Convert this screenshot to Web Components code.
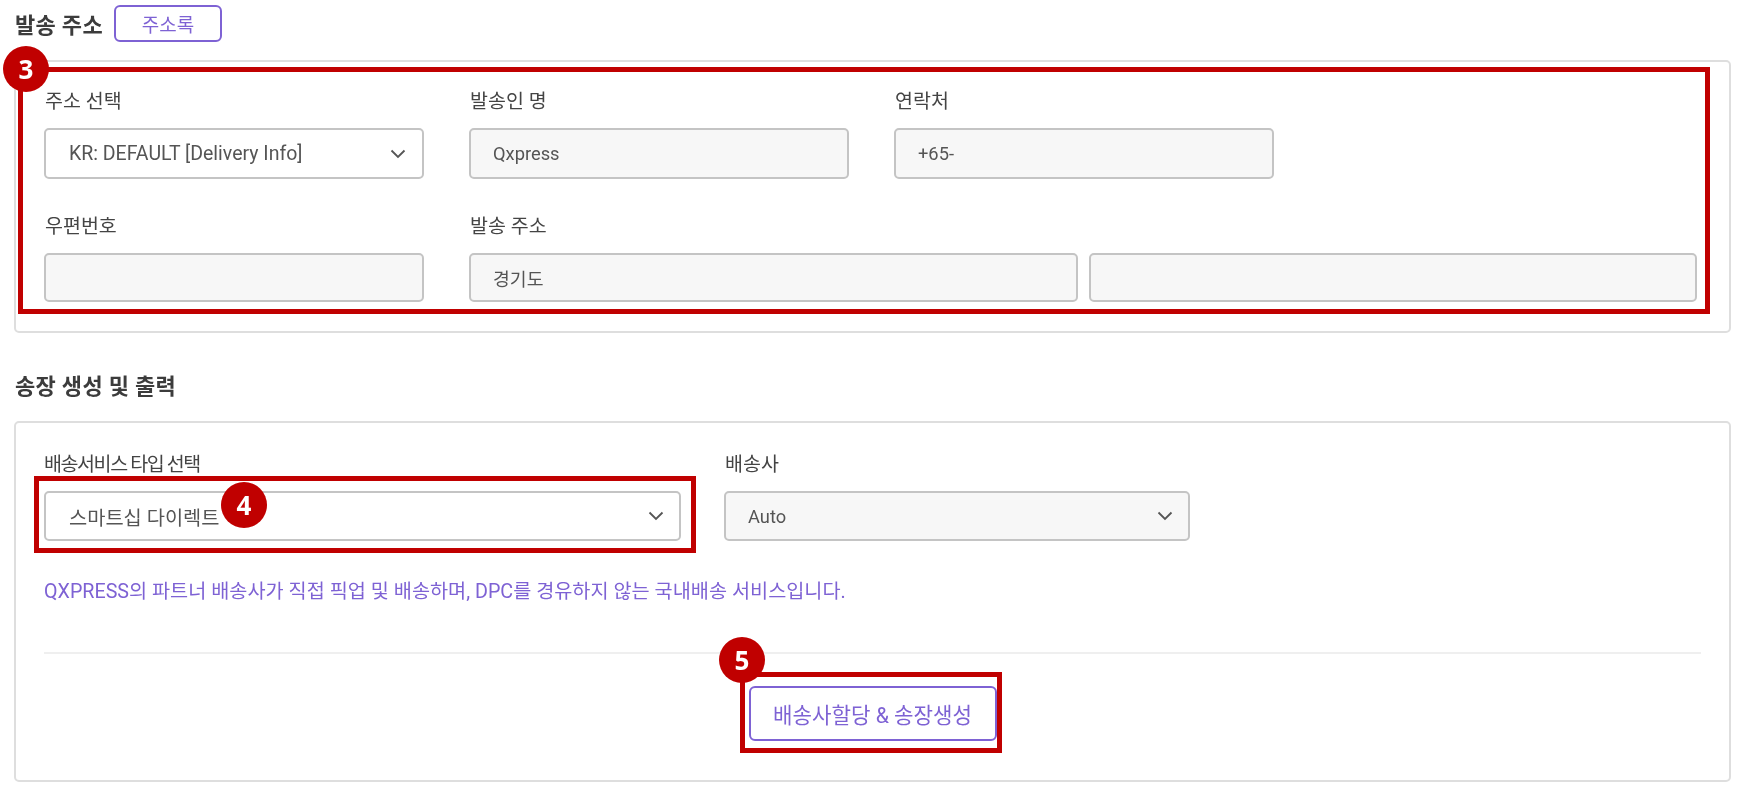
<!DOCTYPE html>
<html lang="ko"><head><meta charset="utf-8"><title>발송 주소</title>
<style>
html,body{margin:0;padding:0;background:#fff;height:787px;overflow:hidden}
body{font-family:Roboto,"Noto Sans CJK KR",sans-serif;color:#444}
</style></head><body>
<qx-page>
  <qx-head><span>발송 주소</span><qx-button slot="action" small>주소록</qx-button></qx-head>
  <qx-card style="--mt:18px;--pad:28px 32px 29px 28px">
    <qx-row style="--lg:14px">
      <qx-field label="주소 선택"><qx-input select white style="--fs:19.5px;--pr:16px">KR: DEFAULT [Delivery Info]</qx-input></qx-field>
      <qx-field label="발송인 명"><qx-input>Qxpress</qx-input></qx-field>
      <qx-field label="연락처"><qx-input>+65-</qx-input></qx-field>
    </qx-row>
    <qx-row style="--rmt:36px;--h:49px;--lg:14px">
      <qx-field label="우편번호"><qx-input></qx-input></qx-field>
      <qx-field label="발송 주소" wide><qx-input grow>경기도</qx-input><qx-input grow></qx-input></qx-field>
    </qx-row>
  </qx-card>
  <qx-head style="--mt:33px"><span>송장 생성 및 출력</span></qx-head>
  <qx-card style="--mt:18px;--pad:30px 28px 39px 28px">
    <qx-row style="--gap:43px;--h:50px;--lg:14px">
      <qx-field label="배송서비스 타입 선택" style="--w:637px;--ls:-1.4px;--lp:0"><qx-input select white style="--fs:19.8px">스마트십 다이렉트</qx-input></qx-field>
      <qx-field label="배송사" style="--w:466px"><qx-input select>Auto</qx-input></qx-field>
    </qx-row>
    <qx-note>QXPRESS의 파트너 배송사가 직접 픽업 및 배송하며, DPC를 경유하지 않는 국내배송 서비스입니다.</qx-note>
    <qx-actions><qx-button>배송사할당 &amp; 송장생성</qx-button></qx-actions>
  </qx-card>
  <qx-mark n="3" x="18" y="67" w="1692" h="247" bx="26" by="69"></qx-mark>
  <qx-mark n="4" x="34" y="476" w="662" h="77" bx="244" by="505"></qx-mark>
  <qx-mark n="5" x="740" y="672" w="262" h="81" bx="742" by="660"></qx-mark>
</qx-page>
<script>
const el=(name,html,init)=>customElements.define(name,class extends HTMLElement{
  constructor(){super();this.attachShadow({mode:'open'}).innerHTML=html;}
  connectedCallback(){init&&init(this,this.shadowRoot);}
});
el('qx-page',`<style>:host{display:block;position:relative;width:1741px;height:787px;padding:5px 10px 0 14px;box-sizing:border-box;filter:blur(.3px)}</style><slot></slot>`);
el('qx-head',`<style>:host{display:flex;align-items:center;gap:11px;height:37px;margin-top:var(--mt,0);padding-left:1px;font-size:22px;font-weight:700;color:#3c3c3c;letter-spacing:.3px}::slotted(span){padding-bottom:2px}</style><slot></slot><slot name="action"></slot>`);
el('qx-card',`<style>:host{display:block;margin-top:var(--mt,0);padding:var(--pad,0);border:2px solid #dedede;border-radius:5px;box-sizing:border-box;background:#fff}</style><slot></slot>`);
el('qx-row',`<style>:host{display:flex;gap:var(--gap,45px);margin-top:var(--rmt,0)}</style><slot></slot>`);
el('qx-field',`<style>:host{display:block;flex:none;width:var(--w,380px)}:host([wide]){flex:1;width:auto}
.l{height:24px;line-height:24px;font-size:19.5px;letter-spacing:var(--ls,0);padding-left:var(--lp,1px);color:#444;margin-bottom:var(--lg,15px)}
.c{display:flex;gap:11px}</style><div class="l"></div><div class="c"><slot></slot></div>`,(h,s)=>{s.querySelector('.l').textContent=h.getAttribute('label')});
el('qx-input',`<style>:host{display:flex;align-items:center;justify-content:space-between;box-sizing:border-box;flex:1 1 0;min-width:0;height:var(--h,51px);padding:0 var(--pr,15px) 0 22px;border:2px solid #c4c4c4;border-radius:5px;background:#f7f7f7;font-size:var(--fs,18.3px);color:#555;white-space:nowrap}
:host([white]){background:#fff;padding-left:23px}svg{display:none;flex:none}:host([select]) svg{display:block}</style><span><slot></slot></span><svg width="16" height="10" viewBox="0 0 16 10" fill="none"><path d="M1.5 1.5L8 8l6.5-6.5" stroke="#555" stroke-width="1.8"/></svg>`);
el('qx-button',`<style>:host{display:inline-flex;align-items:center;justify-content:center;box-sizing:border-box;width:248px;height:55px;border:2px solid #7e62d4;border-radius:6px;background:#fff;color:#7e62d4;font-size:21.2px;font-weight:400;letter-spacing:0}
:host([small]){width:108px;height:37px;font-size:19px}</style><slot></slot>`);
el('qx-note',`<style>:host{display:block;margin-top:39px;height:24px;line-height:24px;font-size:19.7px;color:#7e62d4;white-space:nowrap}</style><slot></slot>`);
el('qx-actions',`<style>:host{display:flex;justify-content:center;margin-top:48px;padding-top:32px;border-top:2px solid #efefef}</style><slot></slot>`);
el('qx-mark',`<style>:host{display:block;position:absolute;left:0;top:0;width:0;height:0}
.b{position:absolute;box-sizing:border-box;border:5px solid #c00000}
.n{position:absolute;width:46px;height:46px;margin:-23px 0 0 -23px;border-radius:50%;background:#c00000;color:#fff;font:700 26px/46px "Noto Sans",sans-serif;text-align:center}</style><div class="b"></div><div class="n"></div>`,(h,s)=>{
  const a=k=>h.getAttribute(k)+'px',b=s.querySelector('.b'),n=s.querySelector('.n');
  b.style.cssText=`left:${a('x')};top:${a('y')};width:${a('w')};height:${a('h')}`;
  n.style.left=a('bx');n.style.top=a('by');n.textContent=h.getAttribute('n');
});
</script>
</body></html>
